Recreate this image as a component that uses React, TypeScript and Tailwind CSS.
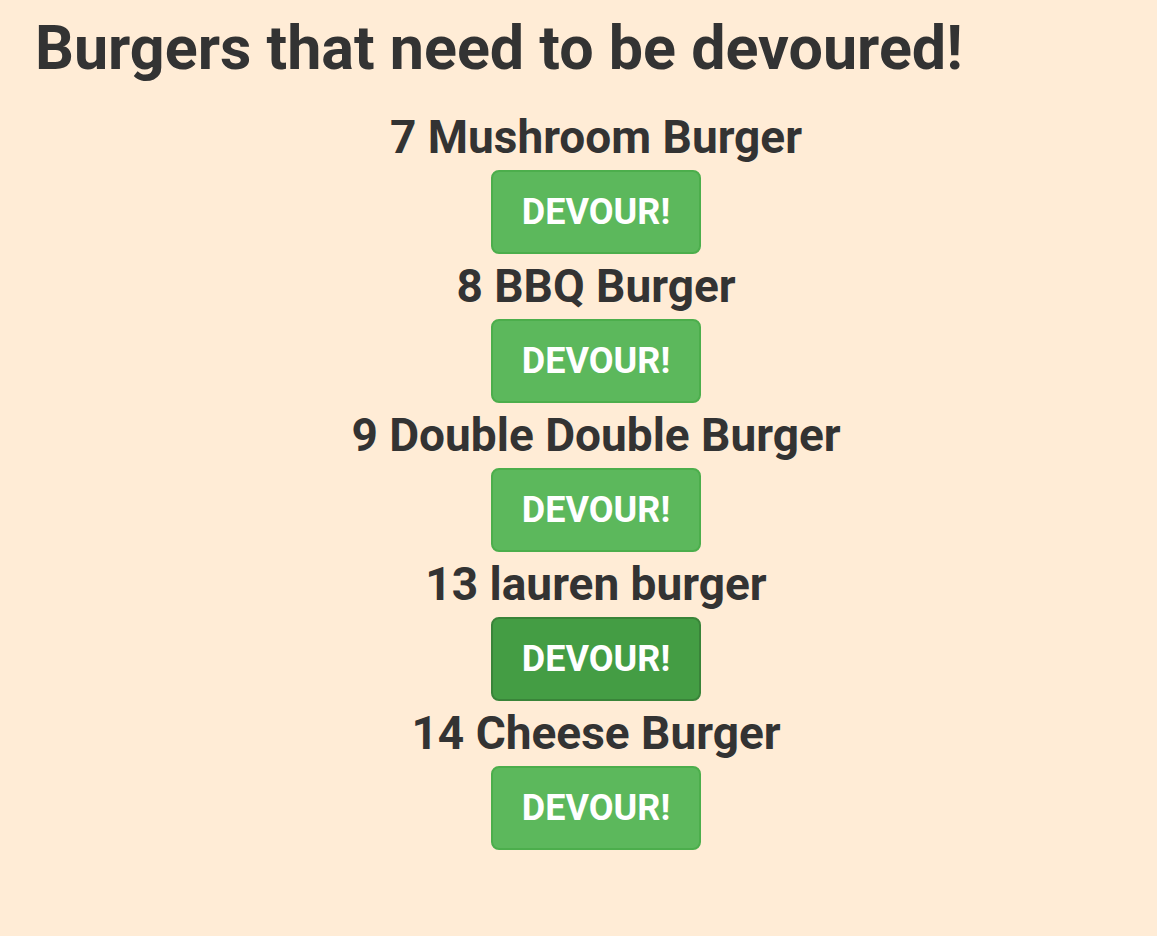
import { useState } from 'react'

const burgers = [
  { id: 7, name: 'Mushroom Burger' },
  { id: 8, name: 'BBQ Burger' },
  { id: 9, name: 'Double Double Burger' },
  { id: 13, name: 'lauren burger' },
  { id: 14, name: 'Cheese Burger' },
]

export default function App() {
  const [active] = useState(13)

  return (
    <div className="min-h-[936px] bg-[#ffecd6] text-[#333] font-['Roboto',sans-serif] pl-[35px]">
      <h1 className="pt-[14px] text-[61px] font-bold leading-[68px]">
        Burgers that need to be devoured!
      </h1>

      <div className="flex flex-col items-center pt-[23px]">
        {burgers.map(b => (
          <div key={b.id} className="flex flex-col items-center">
            <h2 className="text-[46px] font-bold leading-[65px]">
              {b.id} {b.name}
            </h2>
            <button
              className={
                b.id === active
                  ? 'w-[210px] h-[84px] rounded-[8px] border-2 border-[#398439] bg-[#449d44] text-white text-[36px] font-bold'
                  : 'w-[210px] h-[84px] rounded-[8px] border-2 border-[#4cae4c] bg-[#5cb85c] text-white text-[36px] font-bold'
              }
            >
              DEVOUR!
            </button>
          </div>
        ))}
      </div>
    </div>
  )
}
